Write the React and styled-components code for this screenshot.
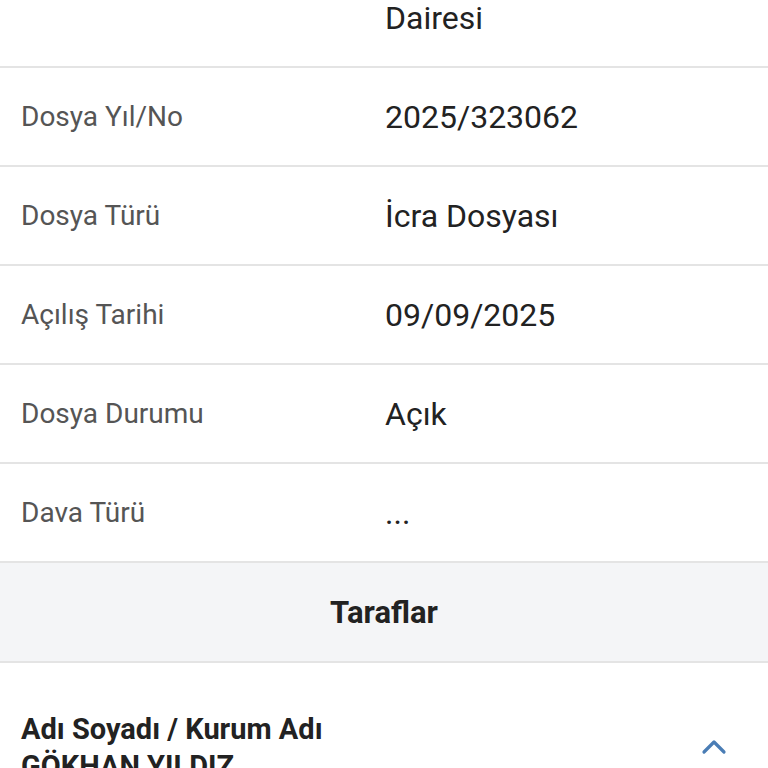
import React from 'react';
import styled, { createGlobalStyle } from 'styled-components';

const GlobalStyle = createGlobalStyle`
  html, body {
    margin: 0;
    padding: 0;
    background: #ffffff;
  }
  body {
    font-family: Roboto, "Liberation Sans", sans-serif;
    -webkit-font-smoothing: antialiased;
  }
`

const Page = styled.div`
  width: 768px;
  height: 768px;
  overflow: hidden;
  background: #fff;
`

const Row = styled.div`
  display: grid;
  grid-template-columns: 385px 1fr;
  align-items: ${props => props.top ? 'start' : 'center'};
  height: ${props => props.top ? '66px' : '97px'};
  border-bottom: 2px solid #e4e4e4;
  box-sizing: content-box;
`

const Label = styled.div`
  padding-left: 21px;
  font-size: 28px;
  color: #555555;
  line-height: 34px;
`

const Value = styled.div`
  font-size: 32px;
  color: #222222;
  line-height: 36px;
`

const SectionHeader = styled.div`
  display: flex;
  align-items: center;
  justify-content: center;
  height: 98px;
  background: #f4f5f7;
  border-bottom: 2px solid #e4e4e4;
  font-size: 31px;
  font-weight: 700;
  color: #222222;
`

const Card = styled.div`
  display: flex;
  align-items: flex-start;
  justify-content: space-between;
  padding: 48px 41px 0 21px;
`

const PartyText = styled.div`
  font-size: 29px;
  font-weight: 700;
  color: #222222;
  line-height: 37px;
`

const Toggle = styled.div`
  display: flex;
  padding-top: 28px;
`

const rows = [
    {label: 'Dosya Yıl/No', value: '2025/323062'},
    {label: 'Dosya Türü', value: 'İcra Dosyası'},
    {label: 'Açılış Tarihi', value: '09/09/2025'},
    {label: 'Dosya Durumu', value: 'Açık'},
    {label: 'Dava Türü', value: '...'},
]

function App() {
    return (
        <>
            <GlobalStyle/>
            <Page>
                <Row top>
                    <Label></Label>
                    <Value>Dairesi</Value>
                </Row>
                {rows.map(r => (
                    <Row key={r.label}>
                        <Label>{r.label}</Label>
                        <Value>{r.value}</Value>
                    </Row>
                ))}
                <SectionHeader>Taraflar</SectionHeader>
                <Card>
                    <PartyText>
                        Adı Soyadı / Kurum Adı<br/>
                        GÖKHAN YILDIZ
                    </PartyText>
                    <Toggle>
                        <svg width="26" height="16" viewBox="0 0 26 16">
                            <path d="M3 13 L13 3 L23 13" fill="none" stroke="#4a7db5" strokeWidth="3.2" strokeLinecap="round" strokeLinejoin="round"/>
                        </svg>
                    </Toggle>
                </Card>
            </Page>
        </>
    )
}

export default App
